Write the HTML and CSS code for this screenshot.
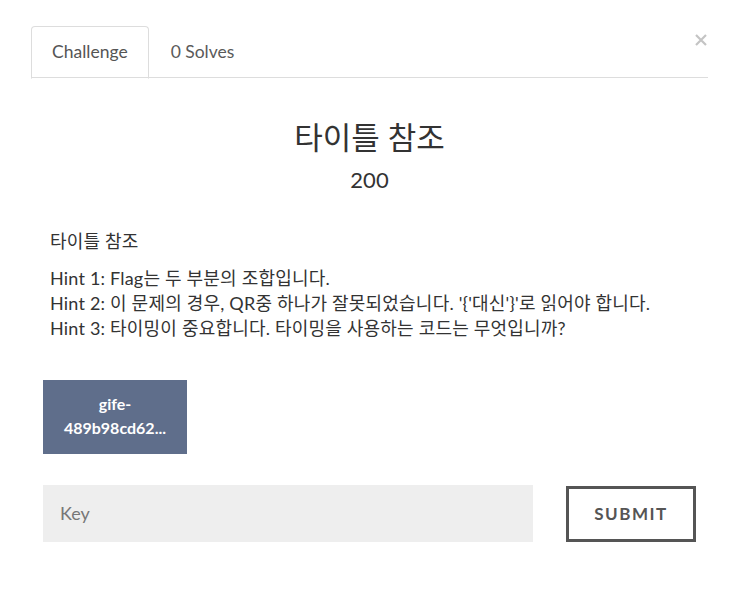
FILE: index.html
```html
<!DOCTYPE html>
<html lang="ko">
<head>
<meta charset="utf-8">
<link rel="stylesheet" href="styles.css">
</head>
<body>
<div class="modal">
  <div class="tabs-row">
    <ul class="tabs">
      <li class="tab active">Challenge</li>
      <li class="tab">0 Solves</li>
    </ul>
    <span class="close"><svg width="12" height="12" viewBox="0 0 12 12"><path d="M1 1 L11 11 M11 1 L1 11" stroke="#c4c4c4" stroke-width="2.2" fill="none"/></svg></span>
  </div>
  <div class="body">
    <h1 class="title">타이틀 참조</h1>
    <div class="value">200</div>
    <div class="desc">
      <p class="name">타이틀 참조</p>
      <p class="hints">Hint 1: Flag는 두 부분의 조합입니다.<br>Hint 2: 이 문제의 경우, QR중 하나가 잘못되었습니다. '{'대신'}'로 읽어야 합니다.<br>Hint 3: 타이밍이 중요합니다. 타이밍을 사용하는 코드는 무엇입니까?</p>
    </div>
    <div class="files">
      <a class="file">gife-<br>489b98cd62...</a>
    </div>
    <div class="submit-row">
      <div class="key">Key</div>
      <div class="submit">SUBMIT</div>
    </div>
  </div>
</div>
</body>
</html>
```

FILE: styles.css
```css
html, body {
  margin: 0;
  padding: 0;
  background: #fff;
}
body {
  font-family: Lato, "Noto Sans CJK KR", sans-serif;
  color: #333;
}
.modal {
  padding: 26px 30px 0 31px;
}
.tabs-row {
  display: flex;
  align-items: flex-start;
}
.tabs {
  list-style: none;
  margin: 0;
  padding: 0;
  display: flex;
  flex: 1;
  border-bottom: 1px solid #ddd;
  height: 51px;
}
.tab {
  padding: 12px 20px 0 20px;
  height: 39px;
  font-size: 17.5px;
  line-height: 26px;
  color: #555;
  border: 1px solid transparent;
  border-top-left-radius: 4px;
  border-top-right-radius: 4px;
}
.tab.active {
  border-color: #ddd;
  border-bottom-color: #fff;
}
.tab + .tab {
  padding-left: 21px;
  color: #5a5a5a;
}
.close {
  width: 0;
  position: relative;
  left: -13px;
  top: 8px;
  line-height: 0;
}
.body {
  padding: 0 12px;
}
.title {
  margin: 39px 0 0 0;
  text-align: center;
  font-weight: 400;
  font-size: 31px;
  line-height: 40px;
  color: #333;
}
.value {
  text-align: center;
  font-size: 22px;
  line-height: 30px;
  margin-top: 8px;
  color: #333;
}
.desc {
  margin-top: 33px;
  padding-left: 7px;
  font-size: 18px;
  font-weight: 400;
  letter-spacing: 0.2px;
  color: #333;
}
.desc p {
  margin: 0;
}
.name {
  line-height: 26px;
}
.hints {
  margin-top: 12px !important;
  line-height: 25px;
}
.files {
  margin-top: 39px;
  display: flex;
}
.file {
  width: 144px;
  height: 74px;
  background: #5f6e8b;
  color: #fff;
  font-weight: 700;
  font-size: 16px;
  line-height: 24px;
  text-align: center;
  display: flex;
  align-items: center;
  justify-content: center;
  box-sizing: border-box;
  padding-bottom: 2px;
}
.submit-row {
  margin-top: 31px;
  display: flex;
  align-items: flex-start;
}
.key {
  width: 490px;
  height: 57px;
  background: #eee;
  box-sizing: border-box;
  padding-left: 17px;
  font-size: 18px;
  line-height: 57px;
  color: #777;
}
.submit {
  margin-left: 33px;
  margin-top: 1px;
  width: 130px;
  height: 56px;
  box-sizing: border-box;
  border: 3px solid #555;
  text-align: center;
  line-height: 50px;
  font-size: 17px;
  font-weight: 700;
  letter-spacing: 1.5px;
  color: #555;
}
```
